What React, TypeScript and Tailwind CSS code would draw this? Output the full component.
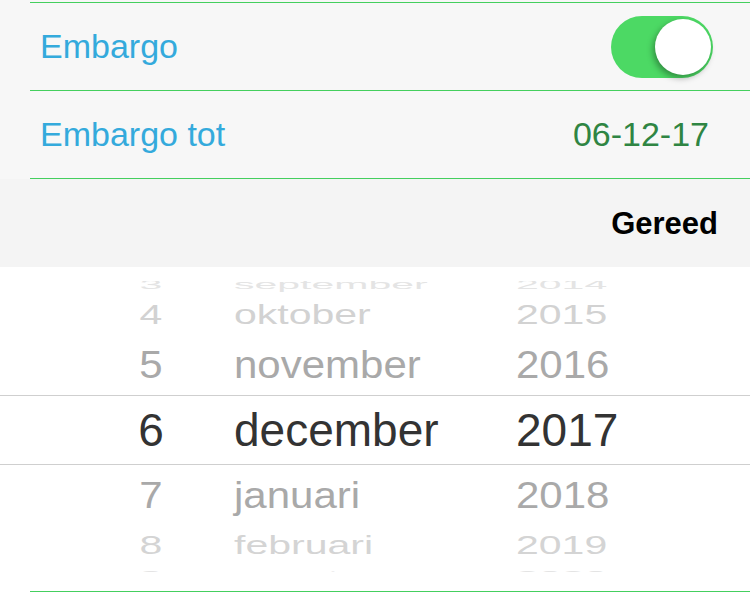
import React from 'react'

type WheelRow = {
  day: string
  month: string
  year: string
  row: string
  text: string
}

// rows of the date wheel, top to bottom; the middle one is the selected date
const wheel: WheelRow[] = [
  { day: '3', month: 'september', year: '2014', row: 'h-[20px] -mt-[7px]', text: 'text-[41px] text-[#e4e4e4] scale-y-[0.3]' },
  { day: '4', month: 'oktober', year: '2015', row: 'h-[41px]', text: 'text-[41px] text-[#d2d2d2] scale-y-[0.68]' },
  { day: '5', month: 'november', year: '2016', row: 'h-[60px]', text: 'text-[42px] text-[#a9a9a9] scale-y-[0.93]' },
  { day: '6', month: 'december', year: '2017', row: 'h-[70px] border-y border-[#cfcfcf]', text: 'text-[46px] text-[#333333]' },
  { day: '7', month: 'januari', year: '2018', row: 'h-[60px]', text: 'text-[42px] text-[#a9a9a9] scale-y-[0.9]' },
  { day: '8', month: 'februari', year: '2019', row: 'h-[40px]', text: 'text-[41px] text-[#d4d4d4] scale-y-[0.62]' },
  { day: '9', month: 'maart', year: '2020', row: 'h-[20px]', text: 'text-[41px] text-[#e4e4e4] scale-y-[0.3]' },
]

function Toggle() {
  return (
    <div className="relative h-[62px] w-[102px] rounded-full bg-[#4cd964]">
      <div className="absolute right-[2px] top-[3px] h-[56px] w-[56px] rounded-full bg-white shadow-[-2px_3px_6px_rgba(0,0,0,0.35)]" />
    </div>
  )
}

export default function App() {
  return (
    <div className="h-[593px] w-[750px] overflow-hidden bg-white font-['Liberation_Sans',Arial,sans-serif]">
      <div className="bg-[#f7f7f7] pt-[2px]">
        <div className="ml-[30px] flex h-[88px] items-center justify-between border-t border-[#44cf5e] pl-[10px] pr-[37px]">
          <span className="-mt-[2px] text-[34px] leading-none text-[#34aadc]">Embargo</span>
          <Toggle />
        </div>
        <div className="ml-[30px] flex h-[89px] items-center justify-between border-y border-[#44cf5e] pl-[10px] pr-[41px]">
          <span className="-mt-[2px] text-[34px] leading-none text-[#34aadc]">Embargo tot</span>
          <span className="-mt-[2px] text-[34px] leading-none text-[#2f8543]">06-12-17</span>
        </div>
      </div>

      <div className="flex h-[88px] items-center justify-end bg-[#f4f4f4] pr-[32px]">
        <span className="text-[31px] font-bold leading-none text-black">Gereed</span>
      </div>

      <div className="pt-[14px]">
        <div className="flex h-[291px] flex-col overflow-hidden">
          {wheel.map((r) => (
            <div key={r.day} className={`flex shrink-0 items-center ${r.row}`}>
              <div className={`flex items-center leading-none ${r.text}`}>
                <span className="ml-[111px] w-[80px] text-center">{r.day}</span>
                <span className="ml-[43px] w-[282px]">{r.month}</span>
                <span>{r.year}</span>
              </div>
            </div>
          ))}
        </div>
        <div className="h-[19px]" />
        <div className="ml-[30px] border-t border-[#44cf5e]" />
      </div>
    </div>
  )
}
